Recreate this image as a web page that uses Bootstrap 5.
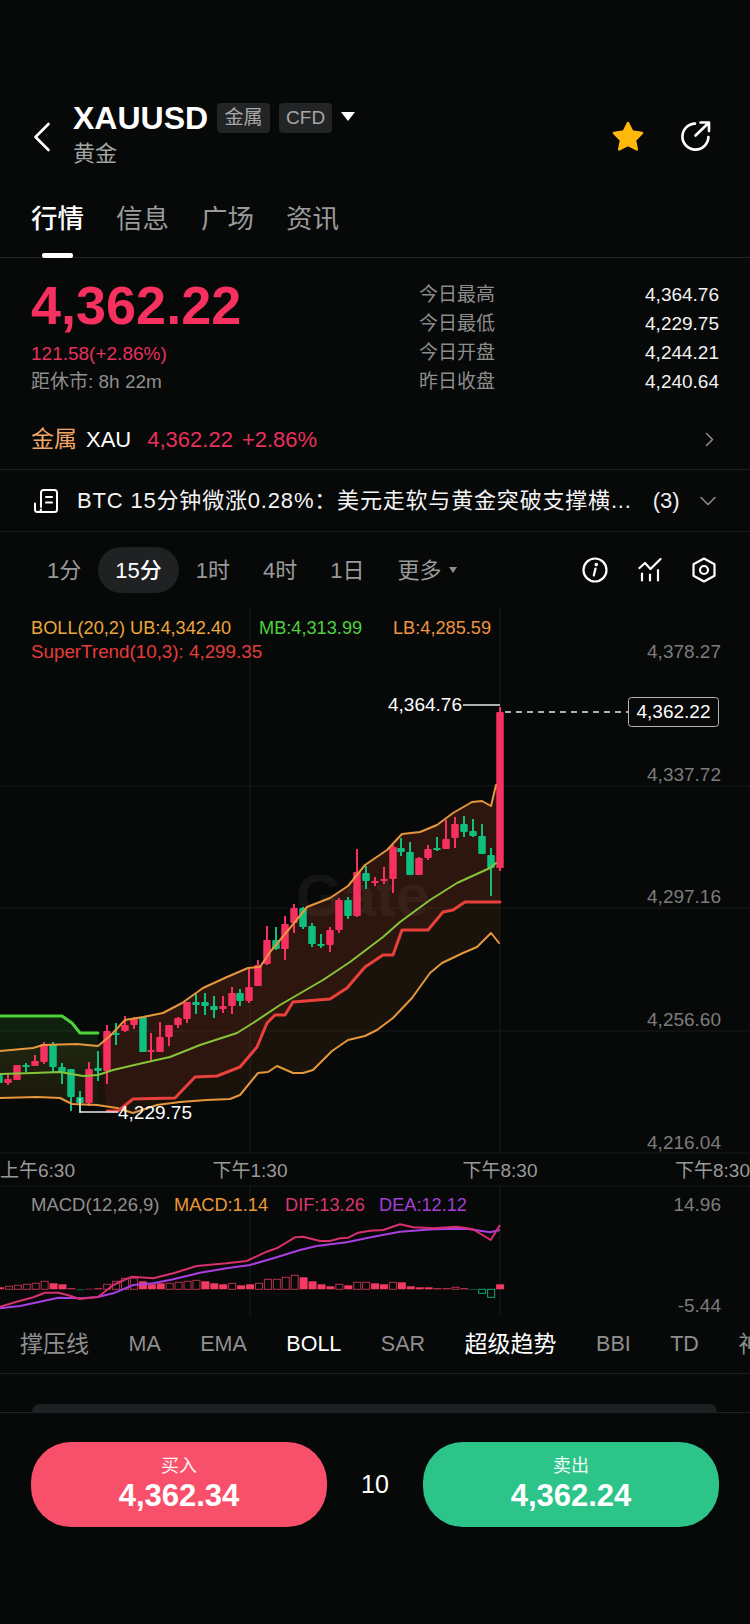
<!DOCTYPE html>
<html lang="zh-CN">
<head>
    <meta charset="UTF-8">
    <meta name="viewport" content="width=device-width, initial-scale=1.0">
    <title>XAUUSD</title>
    <link href="https://cdn.jsdelivr.net/npm/bootstrap@5.3.3/dist/css/bootstrap.min.css" rel="stylesheet">
    <style>
        html, body { background: #070808; }
        body {
            margin: 0;
            font-family: "Liberation Sans", "Noto Sans CJK SC", sans-serif;
            color: #fff;
        }
        .app-shell { width: 750px; height: 1624px; overflow: hidden; padding-top: 101px; background: #070808; }
        .top-bar { height: 66px; padding-left: 33px; padding-right: 38px; }
        .back-icon { width: 18px; height: 30px; margin-right: 22px; margin-top: 21px; }
        .symbol-block { margin-top: -2px; }
        .symbol-name { font-size: 32px; font-weight: 700; line-height: 38px; }
        .symbol-sub { font-size: 22px; line-height: 26px; color: #a3a3a3; margin-top: 4px; }
        .symbol-tag { width: 53px; height: 30px; margin-left: 9px; background: #222426; color: #a8a8a8; border-radius: 4px; font-size: 19px; }
        .caret-down { width: 0; height: 0; border-left: 7px solid transparent; border-right: 7px solid transparent; border-top: 9px solid #fff; margin-left: 9px; margin-top: -3px; }
        .tab-strip { height: 91px; padding-left: 31px; gap: 32px; border-bottom: 1px solid #232526; position: relative; padding-top: 37px; }
        .tab-item { font-size: 26.5px; line-height: 31px; color: #9a9a9a; }
        .tab-item.is-active { color: #fff; font-weight: 500; }
        .tab-marker { position: absolute; left: 42px; bottom: -1px; width: 31px; height: 5px; background: #fff; border-radius: 2px; }
        .quote-row { height: 152px; padding: 22px 31px 0; }
        .last-price { font-size: 54px; line-height: 50px; font-weight: 700; color: #f6305f; }
        .price-change { font-size: 19px; line-height: 24px; color: #e5315c; margin-top: 12px; }
        .close-timer { font-size: 19px; line-height: 24px; color: #8f8f8f; margin-top: 4px; }
        .stat-panel { width: 300px; margin-top: 1px; }
        .stat-line { height: 29px; font-size: 19px; }
        .stat-line span:first-child { color: #8d8d8d; }
        .stat-line span:last-child { color: #f2f2f2; }
        .sector-row { height: 60px; padding: 0 36px 0 31px; border-bottom: 1px solid #1d1f20; font-size: 22px; }
        .sector-name { color: #f2a768; margin-right: 9px; font-size: 23px; }
        .sector-price { color: #e5315c; margin-left: 16px; }
        .sector-pct { color: #e5315c; margin-left: 9px; }
        .news-row { height: 62px; padding: 0 34px 0 34px; border-bottom: 1px solid #161819; }
        .news-text { font-size: 22px; letter-spacing: .82px; margin-left: 19px; white-space: nowrap; color: #f4f4f4; }
        .news-count { font-size: 22px; margin-left: 21px; color: #eee; }
        .period-row { height: 76px; padding-left: 47px; padding-right: 34px; gap: 33px; font-size: 22px; color: #9a9a9a; }
        .period-pill { height: 46px; padding: 0 17px; margin: 0 -16px; background: #1f2122; border-radius: 23px; color: #fff; font-weight: 500; }
        .caret-small { width: 0; height: 0; border-left: 4.5px solid transparent; border-right: 4.5px solid transparent; border-top: 6px solid #8d8d8d; margin-left: 7px; }
        .period-tools { gap: 30px; margin-left: auto; }
        .chart-svg { display: block; width: 750px; height: 708px; }
        .chart-svg text { font-family: "Liberation Sans", "Noto Sans CJK SC", sans-serif; font-size: 18.2px; }
        .chart-svg text.axis-text { font-size: 19px; }
        .indicator-row { height: 58px; padding-left: 20px; gap: 39.5px; font-size: 21.5px; color: #8f8f8f; white-space: nowrap; overflow: hidden; border-bottom: 1px solid #1d1f20; }
        .indicator-row .is-on { color: #fff; }
        .indicator-row .cjk-label { font-size: 23px; }
        .sheet-peek { height: 8px; margin: 30px 33px 0 32px; background: #1e2124; border-radius: 10px 10px 0 0; }
        .trade-bar { border-top: 1px solid #1f2122; padding: 29px 31px 0; }
        .trade-btn { width: 296px; height: 85px; border: 0; border-radius: 40px; color: #fff; padding: 0; }
        .trade-btn:hover, .trade-btn:active { color: #fff; }
        .trade-buy, .trade-buy:hover { background: #f8506a; }
        .trade-sell, .trade-sell:hover { background: #2dc48a; }
        .trade-label { font-size: 18px; line-height: 22px; opacity: .92; }
        .trade-price { font-size: 31px; line-height: 36px; font-weight: 700; margin-top: 1px; }
        .trade-qty { font-size: 25px; }
    </style>
</head>
<body>
<div class="app-shell">
    <div class="top-bar d-flex align-items-start">
        <svg class="back-icon flex-shrink-0" viewBox="0 0 18 30" fill="none" stroke="#fff" stroke-width="2.6" stroke-linecap="round" stroke-linejoin="round"><path d="M15.5 2 2.500 15l13 13"/></svg>
        <div class="symbol-block">
            <div class="d-flex align-items-center">
                <span class="symbol-name">XAUUSD</span>
                <span class="symbol-tag d-flex align-items-center justify-content-center">金属</span>
                <span class="symbol-tag d-flex align-items-center justify-content-center">CFD</span>
                <span class="caret-down"></span>
            </div>
            <div class="symbol-sub">黄金</div>
        </div>
        <div class="ms-auto d-flex align-items-center" style="gap:35px;margin-top:19px">
            <svg width="34" height="32" viewBox="0 0 34 32"><polygon points="17,3 21.3,11.6 31,13 24,20 25.8,29.5 17,25 8.2,29.5 10,20 3,13 12.7,11.6" fill="#ffb80d" stroke="#ffb80d" stroke-width="2.5" stroke-linejoin="round"/></svg>
            <svg width="32" height="32" viewBox="0 0 32 32" fill="none" stroke="#fff" stroke-width="2.6" stroke-linecap="round" stroke-linejoin="round"><path d="M15 3.6A13 13 0 1 0 28.4 17"/><path d="M15.5 15.5 28.5 3M20.500 2.500h8.500V11"/></svg>
        </div>
    </div>

    <div class="tab-strip d-flex">
        <span class="tab-item is-active">行情</span>
        <span class="tab-item">信息</span>
        <span class="tab-item">广场</span>
        <span class="tab-item">资讯</span>
        <span class="tab-marker"></span>
    </div>

    <div class="quote-row d-flex justify-content-between">
        <div>
            <div class="last-price">4,362.22</div>
            <div class="price-change">121.58(+2.86%)</div>
            <div class="close-timer">距休市: 8h 22m</div>
        </div>
        <div class="stat-panel">
            <div class="stat-line d-flex justify-content-between align-items-center"><span>今日最高</span><span>4,364.76</span></div>
            <div class="stat-line d-flex justify-content-between align-items-center"><span>今日最低</span><span>4,229.75</span></div>
            <div class="stat-line d-flex justify-content-between align-items-center"><span>今日开盘</span><span>4,244.21</span></div>
            <div class="stat-line d-flex justify-content-between align-items-center"><span>昨日收盘</span><span>4,240.64</span></div>
        </div>
    </div>

    <div class="sector-row d-flex align-items-center">
        <span class="sector-name">金属</span>
        <span>XAU</span>
        <span class="sector-price">4,362.22</span>
        <span class="sector-pct">+2.86%</span>
        <svg class="ms-auto" width="9" height="15" viewBox="0 0 9 15" fill="none" stroke="#8a8a8a" stroke-width="1.6" stroke-linecap="round" stroke-linejoin="round"><path d="m1.500 1.500 6 6-6 6"/></svg>
    </div>

    <div class="news-row d-flex align-items-center">
        <svg class="flex-shrink-0" width="24" height="24" viewBox="0 0 24 24" fill="none" stroke="#fff" stroke-width="2" stroke-linecap="round" stroke-linejoin="round"><path d="M7 18V3.500A2.500 2.500 0 0 1 9.500 1H20.500A2.500 2.500 0 0 1 23 3.500V20.500A2.500 2.500 0 0 1 20.500 23H3.500A2.500 2.500 0 0 1 1 20.500V14.500"/><path d="M7 20.500A2.500 2.500 0 0 1 4.500 23"/><path d="M12 8h6M12 13.500h6"/></svg>
        <span class="news-text">BTC 15分钟微涨0.28%：美元走软与黄金突破支撑横...</span>
        <span class="news-count">(3)</span>
        <svg class="ms-auto" width="16" height="10" viewBox="0 0 16 10" fill="none" stroke="#8a8a8a" stroke-width="1.6" stroke-linecap="round" stroke-linejoin="round"><path d="m1 1.500 7 7 7-7"/></svg>
    </div>

    <div class="period-row d-flex align-items-center">
        <span>1分</span>
        <span class="period-pill d-flex align-items-center">15分</span>
        <span>1时</span>
        <span>4时</span>
        <span>1日</span>
        <span class="d-flex align-items-center">更多<span class="caret-small"></span></span>
        <div class="period-tools d-flex align-items-center">
            <svg width="26" height="26" viewBox="0 0 26 26" fill="none" stroke="#fff" stroke-width="2.2" stroke-linecap="round"><circle cx="13" cy="13" r="11.500"/><path d="M13.500 11.500 11.800 18.500"/><circle cx="14.300" cy="7.600" r=".7" fill="#fff"/></svg>
            <svg width="24" height="24" viewBox="0 0 24 24" fill="none" stroke="#fff" stroke-width="2.200" stroke-linecap="round" stroke-linejoin="round"><path d="M1.500 10 7 5l5.500 6L22.500 1"/><path d="M4 15.500V22.500M12 16.500V22.500M20 12V22.500"/></svg>
            <svg width="24" height="26" viewBox="0 0 24 26" fill="none" stroke="#fff" stroke-width="2.200" stroke-linejoin="round"><path d="M12 1.500 22.500 7.300V18.700L12 24.500 1.500 18.700V7.300Z"/><circle cx="12" cy="13" r="4"/></svg>
        </div>
    </div>

    <svg class="chart-svg" id="chart" viewBox="0 608 750 708" xmlns="http://www.w3.org/2000/svg">
        <defs>
            <linearGradient id="greenFade" x1="0" y1="0" x2="0" y2="1">
                <stop offset="0" stop-color="#3fae2f" stop-opacity=".16"/>
                <stop offset="1" stop-color="#3fae2f" stop-opacity=".03"/>
            </linearGradient>
        </defs>
        <g id="grid" stroke="#17181a" stroke-width="1.200"></g>
        <text x="296" y="916" font-weight="700" style="font-size:60px" fill="#141515">Gate</text>
        <g id="fills"></g>
        <g id="candles"></g>
        <g id="lines" fill="none" stroke-linejoin="round" stroke-linecap="round"></g>
        <g id="macd"></g>

        <text x="31" y="634" fill="#eda63a">BOLL(20,2) UB:4,342.40</text>
        <text x="259" y="634" fill="#4fd13f">MB:4,313.99</text>
        <text x="393" y="634" fill="#ee9440">LB:4,285.59</text>
        <text x="31" y="658" fill="#e53c3c" style="font-size:18.800px">SuperTrend(10,3): 4,299.35</text>

        <g fill="#7c7c7c" text-anchor="end">
            <text class="axis-text" x="721" y="658">4,378.27</text>
            <text class="axis-text" x="721" y="781">4,337.72</text>
            <text class="axis-text" x="721" y="903">4,297.16</text>
            <text class="axis-text" x="721" y="1026">4,256.60</text>
            <text class="axis-text" x="721" y="1149">4,216.04</text>
            <text class="axis-text" x="721" y="1211">14.96</text>
            <text class="axis-text" x="721" y="1312">-5.44</text>
        </g>

        <text class="axis-text" x="388" y="711" fill="#fff">4,364.76</text>
        <path d="M463 705H500" stroke="#e8e8e8" stroke-width="1.300"/>
        <path d="M505 712H628" stroke="#e8e8e8" stroke-width="1.300" stroke-dasharray="6 5"/>
        <rect x="628.500" y="697.500" width="90" height="29" rx="3" fill="#070808" stroke="#b5b5b5"/>
        <text class="axis-text" x="673.500" y="718" fill="#fff" text-anchor="middle">4,362.22</text>
        <path d="M80 1098V1112H118" fill="none" stroke="#e8e8e8" stroke-width="1.300"/>
        <text class="axis-text" x="118" y="1119" fill="#fff">4,229.75</text>

        <g fill="#9a9a9a">
            <text class="axis-text" x="0" y="1177">上午6:30</text>
            <text class="axis-text" x="250" y="1177" text-anchor="middle">下午1:30</text>
            <text class="axis-text" x="500" y="1177" text-anchor="middle">下午8:30</text>
            <text class="axis-text" x="750" y="1177" text-anchor="end">下午8:30</text>
        </g>

        <text x="31" y="1211" fill="#8f8f8f" style="font-size:18.500px">MACD(12,26,9)</text>
        <text x="174" y="1211" fill="#e99a36">MACD:1.14</text>
        <text x="285" y="1211" fill="#d9366f">DIF:13.26</text>
        <text x="379" y="1211" fill="#a33fd6">DEA:12.12</text>
    </svg>

    <div class="indicator-row d-flex align-items-center">
        <span class="cjk-label">撑压线</span>
        <span>MA</span>
        <span>EMA</span>
        <span class="is-on">BOLL</span>
        <span>SAR</span>
        <span class="is-on cjk-label">超级趋势</span>
        <span>BBI</span>
        <span>TD</span>
        <span class="cjk-label">神奇九转</span>
    </div>

    <div class="sheet-peek"></div>

    <div class="trade-bar d-flex justify-content-between align-items-center">
        <button class="btn trade-btn trade-buy d-flex flex-column align-items-center justify-content-center">
            <span class="trade-label">买入</span>
            <span class="trade-price">4,362.34</span>
        </button>
        <span class="trade-qty">10</span>
        <button class="btn trade-btn trade-sell d-flex flex-column align-items-center justify-content-center">
            <span class="trade-label">卖出</span>
            <span class="trade-price">4,362.24</span>
        </button>
    </div>
</div>

<script>
    const NS = 'http://www.w3.org/2000/svg';
    const RED = '#f6305f', GREEN = '#0fbf80';

    const addEl = (parentId, tag, attrs) => {
        const el = document.createElementNS(NS, tag);
        Object.entries(attrs).forEach(([k, v]) => el.setAttribute(k, v));
        document.getElementById(parentId).appendChild(el);
    };
    const pts = list => list.map(p => p.join(',')).join(' ');

    // grid
    [786, 908, 1031, 1153, 1186].forEach(y => addEl('grid', 'line', { x1: 0, x2: 750, y1: y, y2: y }));
    [250, 500].forEach(x => {
        addEl('grid', 'line', { x1: x, x2: x, y1: 608, y2: 1153 });
        addEl('grid', 'line', { x1: x, x2: x, y1: 1186, y2: 1316 });
    });

    // overlay lines, read off the reference
    const upper = [[0,1051],[33,1048],[43,1045],[77,1044],[98,1046],[110,1036],[125,1020],[143,1017],[163,1013],[182,1003],[203,988],[227,977],[248,968],[260,967],[270,952],[290,928],[307,907],[330,898],[348,886],[365,865],[387,850],[402,834],[420,832],[437,825],[453,813],[472,802],[482,801],[491,806],[496,785]];
    const mid = [[0,1074],[33,1073],[60,1072],[83,1076],[98,1075],[113,1070],[143,1063],[170,1057],[200,1045],[237,1033],[253,1023],[280,1005],[323,980],[350,962],[383,937],[400,922],[430,900],[457,883],[490,868],[496,863]];
    const lower = [[0,1098],[37,1097],[60,1098],[72,1104],[97,1105],[117,1108],[133,1113],[157,1105],[180,1102],[207,1100],[230,1099],[240,1095],[258,1073],[268,1072],[277,1066],[293,1073],[303,1073],[313,1070],[332,1051],[348,1040],[365,1036],[377,1030],[393,1018],[412,998],[430,973],[442,963],[463,953],[477,947],[491,933],[499,943]];
    const stGreen = [[0,1016],[62,1016],[72,1023],[80,1033],[98,1033]];
    const stRed = [[107,1111],[118,1111],[133,1099],[175,1098],[195,1077],[217,1076],[240,1067],[257,1047],[267,1023],[275,1015],[285,1015],[293,1002],[330,999],[347,988],[365,967],[383,955],[393,955],[402,930],[428,930],[443,912],[453,910],[465,902],[500,902]];

    const bandFill = [...upper, [500,785], [500,943], ...lower.slice().reverse()];
    addEl('fills', 'polygon', { points: pts(bandFill), fill: '#c8782a', 'fill-opacity': .1 });
    addEl('fills', 'polygon', { points: pts([[100,1046], ...upper.slice(5), [500,785], [500,902], ...stRed.slice().reverse()]), fill: '#e83a2a', 'fill-opacity': .09 });
    addEl('fills', 'polygon', { points: pts([...stGreen, [98,1105], [72,1104], [60,1098], [37,1097], [0,1098]]), fill: 'url(#greenFade)' });

    // [x, wickTop, wickBottom, bodyTop, bodyBottom, up?]
    const candles = [
        [-1,1072,1085,1075,1083,0],[8,1073,1085,1079,1083,1],[17,1065,1080,1065,1080,1],[26,1063,1072,1065,1066,0],
        [35,1055,1066,1061,1066,1],[44,1042,1064,1044,1062,1],[53,1042,1072,1044,1067,0],[62,1063,1084,1067,1072,0],
        [71,1069,1111,1069,1097,0],[80,1091,1113,1097,1103,0],[89,1062,1106,1069,1103,1],[98,1051,1081,1068,1071,0],
        [107,1025,1084,1031,1071,1],[116,1023,1045,1033,1035,0],[125,1016,1032,1025,1031,1],[134,1017,1029,1018,1025,1],
        [143,1017,1052,1017,1052,0],[151,1033,1060,1050,1051,1],[160,1022,1052,1037,1052,1],[169,1025,1046,1025,1037,1],
        [178,1017,1028,1018,1025,1],[187,1002,1023,1002,1019,1],[196,994,1014,1002,1005,0],[205,993,1015,1002,1006,0],
        [214,996,1018,1006,1010,0],[223,996,1013,1006,1009,1],[232,987,1014,993,1006,1],[240,989,1006,993,1001,0],
        [249,968,1003,987,1001,1],[258,960,986,965,986,1],[267,926,965,940,964,1],[276,927,950,940,949,0],
        [285,916,960,924,949,1],[294,904,933,908,923,1],[303,907,929,908,927,0],[312,923,947,926,944,0],
        [321,934,948,944,946,0],[330,927,952,930,945,1],[339,898,933,900,930,1],[348,897,919,900,916,0],
        [357,849,917,872,916,1],[366,866,889,873,881,0],[375,877,886,881,883,1],[384,867,884,879,881,1],
        [393,845,893,847,879,1],[401,838,856,848,852,0],[410,842,875,852,875,0],[419,857,875,858,875,1],
        [428,845,860,849,858,1],[437,837,851,848,850,0],[446,820,849,839,849,1],[455,817,848,824,838,1],
        [464,816,837,824,832,0],[473,819,837,831,836,0],[482,824,854,836,854,0],[491,848,896,855,868,0],
        [500,707,871,712,868,1]
    ];
    candles.forEach(([x, wt, wb, bt, bb, up]) => {
        const c = up ? RED : GREEN;
        addEl('candles', 'rect', { x: x - 1, y: wt, width: 2, height: wb - wt, fill: c });
        addEl('candles', 'rect', { x: x - 3.75, y: bt, width: 7.5, height: Math.max(bb - bt, 2), rx: 1, fill: c });
    });

    addEl('lines', 'polyline', { points: pts(upper), stroke: '#e6973c', 'stroke-width': 2 });
    addEl('lines', 'polyline', { points: pts(lower), stroke: '#e6973c', 'stroke-width': 2 });
    addEl('lines', 'polyline', { points: pts(mid), stroke: '#86c53a', 'stroke-width': 2 });
    addEl('lines', 'polyline', { points: pts(stGreen), stroke: '#4ed23a', 'stroke-width': 3 });
    addEl('lines', 'polyline', { points: pts(stRed), stroke: '#e8413c', 'stroke-width': 3 });

    // MACD histogram: heights from the zero line, h = hollow bar
    const bars = [2,'h3','h4','h5','h6','h8',6,5,1,-1,0.5,1,'h5','h8','h11','h11',8,5,6,'h6','h7','h8','h9',8,6,5,'h6',4,5,'h6','h10','h10','h12','h14',12,8,5,3,'h5',4,'h7','h7',6,5,'h7',7,3,2,2,1,1,'h2',1,-0.7,'-h4','-h8',5];
    const zero = 1289.3;
    bars.forEach((b, i) => {
        const hollow = typeof b === 'string';
        const v = hollow ? parseFloat(b.replace('h', '')) : b;
        const x = i * 8.93 - 4;
        const h = Math.abs(v), y = v >= 0 ? zero - h : zero;
        const c = v >= 0 ? '#f23a63' : '#11a870';
        if (hollow) addEl('macd', 'rect', { x: x + .5, y: y, width: 7, height: h, fill: 'none', stroke: v >= 0 ? '#b3344f' : c, 'stroke-width': 1 });
        else addEl('macd', 'rect', { x: x, y: y, width: 8, height: h, fill: v >= 0 ? c : '#0d6b48' });
    });

    // DIF / DEA, sampled in 3x crop pixels
    const toMacd = list => list.map(([x, y]) => [+(x / 3).toFixed(1), +(1190 + y / 3).toFixed(1)]);
    const dif = [[0,350],[50,335],[100,322],[135,308],[175,308],[205,316],[240,327],[295,320],[340,285],[395,260],[460,265],[520,250],[590,228],[680,220],[740,213],[800,185],[830,175],[885,142],[910,140],[960,153],[990,153],[1020,145],[1045,143],[1075,128],[1110,122],[1150,120],[1200,103],[1240,112],[1300,115],[1370,110],[1420,118],[1472,150],[1500,105]];
    const dea = [[0,355],[60,348],[120,335],[175,323],[240,325],[290,322],[340,310],[400,285],[460,280],[520,268],[600,248],[680,235],[750,225],[820,205],[900,180],[950,168],[1040,157],[1120,140],[1200,125],[1300,118],[1400,116],[1470,127],[1500,120]];
    addEl('macd', 'polyline', { points: pts(toMacd(dea)), fill: 'none', stroke: '#a83fe0', 'stroke-width': 2, 'stroke-linejoin': 'round' });
    addEl('macd', 'polyline', { points: pts(toMacd(dif)), fill: 'none', stroke: '#d8306f', 'stroke-width': 2, 'stroke-linejoin': 'round' });
</script>
<script src="https://cdn.jsdelivr.net/npm/bootstrap@5.3.3/dist/js/bootstrap.bundle.min.js"></script>
</body>
</html>
